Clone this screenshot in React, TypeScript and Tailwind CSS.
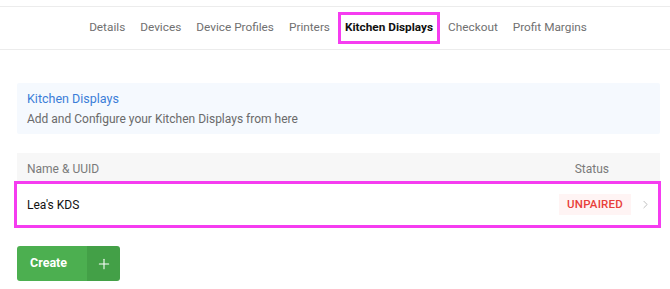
import { ChevronRight, Plus } from "lucide-react";

const tabs = ["Details", "Devices", "Device Profiles", "Printers", "Kitchen Displays", "Checkout", "Profit Margins"];

export default function App() {
  const active = "Kitchen Displays";
  return (
    <div className="w-[670px] h-[289px] bg-white overflow-hidden text-[12px] [font-family:Roboto,'Noto_Sans',sans-serif]">
      {/* Tab bar */}
      <div className="mt-[6px] h-[44px] border-y border-[#ececec] flex items-center justify-center gap-[1px] pl-[6px] text-[11.8px]">
        {tabs.map((t) => (
          <div
            key={t}
            className={
              t === active
                ? "h-[32px] px-[4px] flex items-center border-[3px] border-[#f53cf0] text-[#111] font-bold"
                : "h-[32px] px-[4px] flex items-center border-[3px] border-transparent text-[#707070]"
            }
          >
            {t}
          </div>
        ))}
      </div>

      <div className="pl-[17px] pr-[10px]">
        {/* Info panel */}
        <div className="mt-[33px] h-[51px] bg-[#f5f9fe] rounded-[2px] px-[10px] flex flex-col justify-center gap-[6px]">
          <div className="text-[#3b7dd8] text-[12.5px] leading-[14px]">Kitchen Displays</div>
          <div className="text-[#6a6a6a] leading-[14px]">Add and Configure your Kitchen Displays from here</div>
        </div>

        {/* Table */}
        <div className="mt-[19px]">
          <div className="h-[31px] bg-[#f7f7f7] flex items-center justify-between pl-[10px] pr-[51px] text-[#7a7a7a]">
            <span>Name &amp; UUID</span>
            <span>Status</span>
          </div>
          <div className="h-[41px] mr-[2px] bg-white outline-[3px] outline-solid outline-[#f53cf0] flex items-center pl-[10px] pr-[6px]">
            <span className="flex-1 text-[#111]">Lea's KDS</span>
            <span className="h-[21px] w-[72px] flex items-center justify-center bg-[#fff4f4] text-[#e8403a] text-[11.5px] font-medium tracking-[0.2px]">
              UNPAIRED
            </span>
            <ChevronRight className="ml-[8px] text-[#b0b0b0]" size={13} strokeWidth={1.5} />
          </div>
        </div>

        {/* Create button */}
        <div className="mt-[21px] inline-flex h-[35px] rounded-[3px] overflow-hidden text-white">
          <div className="w-[70px] bg-[#4caf50] flex items-center pl-[13px] font-bold text-[12.5px]">Create</div>
          <div className="w-[33px] bg-[#43a047] flex items-center justify-center">
            <Plus size={16} strokeWidth={1.6} />
          </div>
        </div>
      </div>
    </div>
  );
}
